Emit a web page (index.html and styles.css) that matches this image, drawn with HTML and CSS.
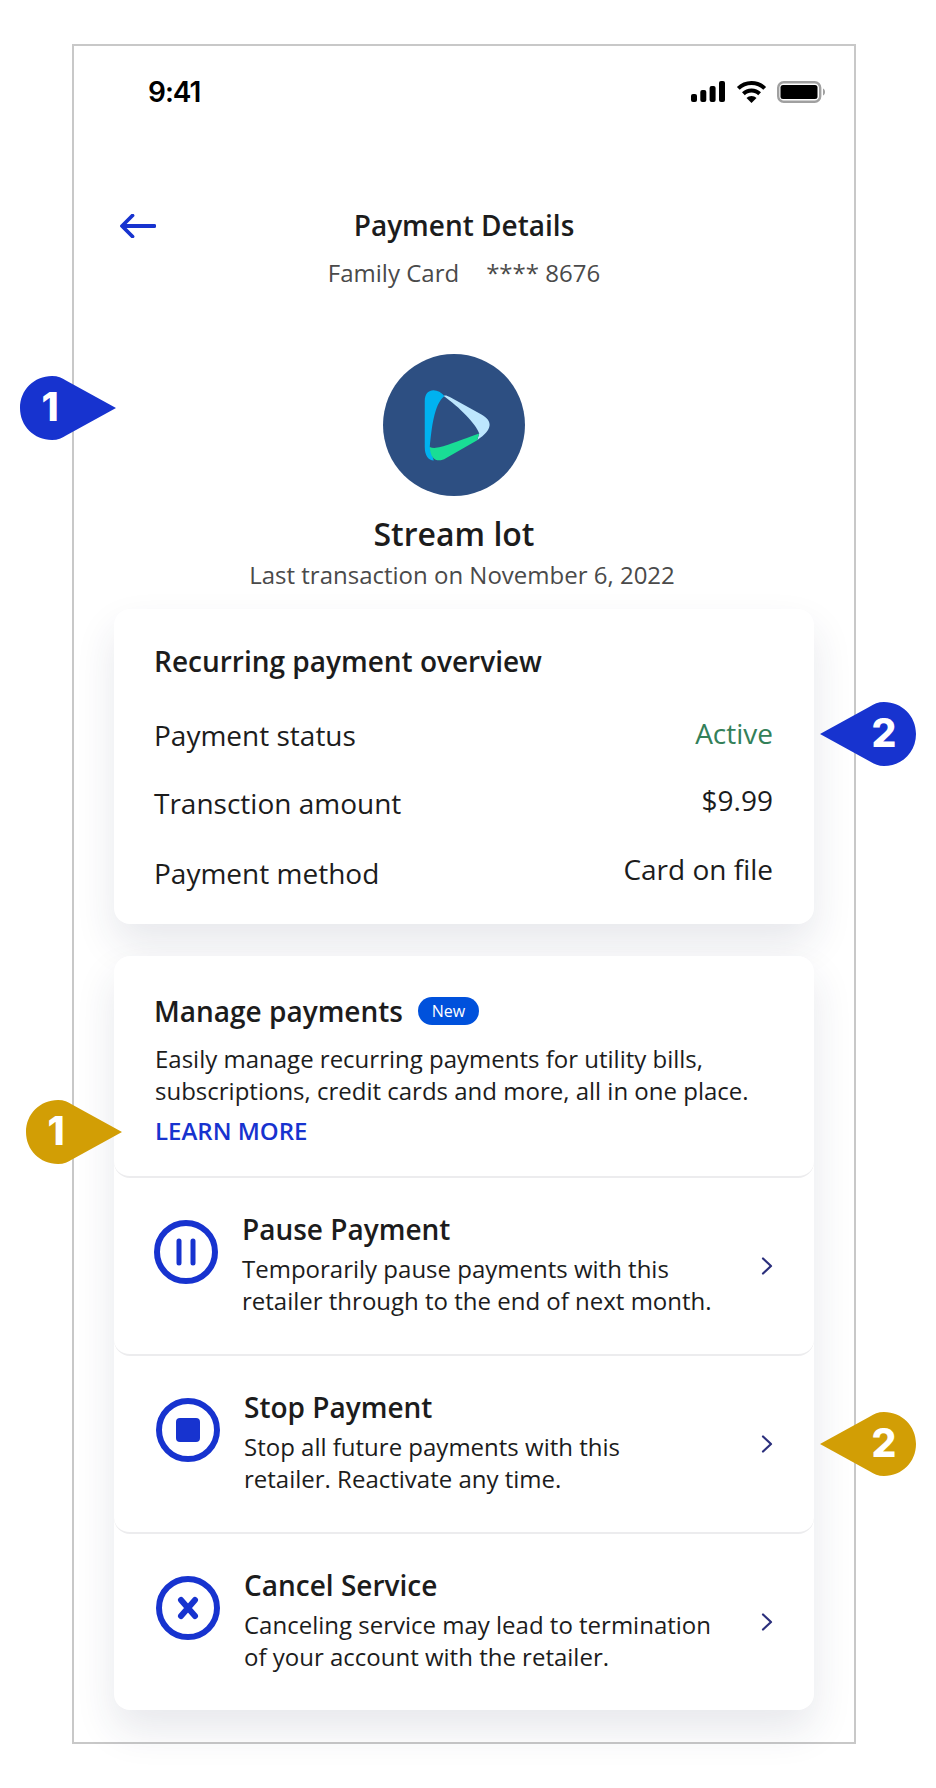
FILE: index.html
```html
<!DOCTYPE html>
<html lang="en">
<head>
    <meta charset="UTF-8">
    <title>Payment Details</title>
    <link rel="stylesheet" href="styles.css">
</head>
<body>
    <div class="phone">
        <!-- Status bar -->
        <div class="status-bar">
            <span class="status-time">9:41</span>
            <div class="status-icons">
                <svg class="icon-signal" width="34" height="21" viewBox="0 0 34 21">
                    <rect x="0" y="13" width="6" height="8" rx="2"/>
                    <rect x="9.3" y="9" width="6" height="12" rx="2"/>
                    <rect x="18.6" y="5" width="6" height="16" rx="2"/>
                    <rect x="28" y="0" width="6" height="21" rx="2"/>
                </svg>
                <svg class="icon-wifi" width="31" height="22" viewBox="0 0 30 22">
                    <path d="M15 0C9.3 0 4.2 2.2 .4 5.9L3.2 8.8C6.3 5.800 10.400 4 15 4s8.700 1.800 11.800 4.800l2.800-2.900C25.800 2.200 20.700 0 15 0z"/>
                    <path d="M15 7.500c-3.700 0-7 1.400-9.500 3.800l2.800 2.900c1.800-1.700 4.100-2.700 6.700-2.700s4.900 1 6.700 2.700l2.800-2.900C22 8.900 18.700 7.500 15 7.500z"/>
                    <path d="M15 15c-2 0-3.700.8-5 2l5 5 5-5c-1.300-1.200-3-2-5-2z"/>
                </svg>
                <svg class="icon-battery" width="48" height="22" viewBox="0 0 48 22">
                    <rect x="1.200" y="1.200" width="42" height="19.600" rx="5.500" fill="none" stroke="#a0a0a0" stroke-width="2.400"/>
                    <rect x="3.500" y="4" width="37" height="14" rx="2.500"/>
                    <path d="M46 7.500c1.200.4 2 1.800 2 3.500s-.8 3.100-2 3.500z" fill="#a0a0a0"/>
                </svg>
            </div>
        </div>

        <!-- Page title -->
        <div class="page-header">
            <svg class="back-arrow" width="36" height="24" viewBox="0 0 36 24">
                <path d="M34.500 12H2.500M12.500 1.500L2 12l10.500 10.500" fill="none" stroke="#1733cf" stroke-width="3.800" stroke-linecap="round" stroke-linejoin="round"/>
            </svg>
            <div class="page-title">Payment Details</div>
        </div>
        <div class="page-subtitle"><span>Family Card</span><span>**** 8676</span></div>

        <!-- Merchant -->
        <div class="merchant">
            <svg class="merchant-logo" width="142" height="142" viewBox="40 27 425 425">
                <circle cx="252.500" cy="239.500" r="212.500" fill="#2d4f82"/>
                <path d="M224 153C205 128 165 126 165 168V305C165 332 176 344 192 346L180 305C186 250 192 178 224 153Z" fill="#00b2f0"/>
                <path d="M222 153C226 150 232 152 240 156L336 209C368 228 370 252 322 285L328 265C318 236 268 186 222 153Z" fill="#bde6fd"/>
                <path d="M180 305C200 316 240 296 328 265L322 285L228 339C206 352 182 346 180 305Z" fill="#19dd95"/>
            </svg>
            <div class="merchant-name">Stream lot</div>
        </div>
        <div class="last-transaction">Last transaction on November 6, 2022</div>

        <!-- Overview card -->
        <div class="card overview">
            <div class="card-title">Recurring payment overview</div>
            <div class="overview-row">
                <span>Payment status</span>
                <span class="overview-value status-active">Active</span>
            </div>
            <div class="overview-row">
                <span>Transction amount</span>
                <span class="overview-value">$9.99</span>
            </div>
            <div class="overview-row">
                <span>Payment method</span>
                <span class="overview-value">Card on file</span>
            </div>
        </div>

        <!-- Manage card -->
        <div class="card manage">
            <div class="manage-intro">
                <div class="manage-heading">
                    <span class="card-title">Manage payments</span>
                    <span class="pill-new">New</span>
                </div>
                <p class="manage-text">Easily manage recurring payments for utility bills,<br>subscriptions, credit cards and more, all in one place.</p>
                <a class="learn-more">LEARN MORE</a>
            </div>

            <div class="action-row action-pause">
                <svg class="action-icon" width="64" height="64" viewBox="0 0 64 64">
                    <circle cx="32" cy="32" r="29" fill="none" stroke="#1733cf" stroke-width="6"/>
                    <path d="M25 21V43M39 21V43" fill="none" stroke="#1733cf" stroke-width="5" stroke-linecap="round"/>
                </svg>
                <div class="action-body">
                    <div class="card-title">Pause Payment</div>
                    <p class="action-text">Temporarily pause payments with this<br>retailer through to the end of next month.</p>
                </div>
                <svg class="chevron" width="12" height="18" viewBox="0 0 12 18">
                    <path d="M2 1.500L10 9L2 16.500" fill="none" stroke="#2b2f7c" stroke-width="2.200" stroke-linecap="round" stroke-linejoin="round"/>
                </svg>
            </div>

            <div class="action-row">
                <svg class="action-icon" width="64" height="64" viewBox="0 0 64 64">
                    <circle cx="32" cy="32" r="29" fill="none" stroke="#1733cf" stroke-width="6"/>
                    <rect x="20" y="20" width="24" height="24" rx="4" fill="#1733cf"/>
                </svg>
                <div class="action-body">
                    <div class="card-title">Stop Payment</div>
                    <p class="action-text">Stop all future payments with this<br>retailer. Reactivate any time.</p>
                </div>
                <svg class="chevron" width="12" height="18" viewBox="0 0 12 18">
                    <path d="M2 1.500L10 9L2 16.500" fill="none" stroke="#2b2f7c" stroke-width="2.200" stroke-linecap="round" stroke-linejoin="round"/>
                </svg>
            </div>

            <div class="action-row action-last">
                <svg class="action-icon" width="64" height="64" viewBox="0 0 64 64">
                    <circle cx="32" cy="32" r="29" fill="none" stroke="#1733cf" stroke-width="6"/>
                    <path d="M25 24L39 40M39 24L25 40" fill="none" stroke="#1733cf" stroke-width="6" stroke-linecap="round"/>
                </svg>
                <div class="action-body">
                    <div class="card-title">Cancel Service</div>
                    <p class="action-text">Canceling service may lead to termination<br>of your account with the retailer.</p>
                </div>
                <svg class="chevron" width="12" height="18" viewBox="0 0 12 18">
                    <path d="M2 1.500L10 9L2 16.500" fill="none" stroke="#2b2f7c" stroke-width="2.200" stroke-linecap="round" stroke-linejoin="round"/>
                </svg>
            </div>
        </div>
    </div>

    <!-- Annotation markers -->
    <div class="marker marker-blue marker-right marker-a"><svg width="96" height="64" viewBox="0 0 96 64"><path d="M32 0C38 0 42 2 46 4.500L96 32L46 59.500C42 62 38 64 32 64C14 64 0 50 0 32S14 0 32 0Z"/></svg><span>1</span></div>
    <div class="marker marker-blue marker-left marker-b"><svg width="96" height="64" viewBox="0 0 96 64"><path d="M64 0C58 0 54 2 50 4.500L0 32L50 59.500C54 62 58 64 64 64C82 64 96 50 96 32S82 0 64 0Z"/></svg><span>2</span></div>
    <div class="marker marker-gold marker-right marker-c"><svg width="96" height="64" viewBox="0 0 96 64"><path d="M32 0C38 0 42 2 46 4.500L96 32L46 59.500C42 62 38 64 32 64C14 64 0 50 0 32S14 0 32 0Z"/></svg><span>1</span></div>
    <div class="marker marker-gold marker-left marker-d"><svg width="96" height="64" viewBox="0 0 96 64"><path d="M64 0C58 0 54 2 50 4.500L0 32L50 59.500C54 62 58 64 64 64C82 64 96 50 96 32S82 0 64 0Z"/></svg><span>2</span></div>
</body>
</html>
```

FILE: styles.css
```css
html, body {
    margin: 0;
    padding: 0;
    background: #fff;
}
body {
    width: 936px;
    height: 1788px;
    position: relative;
    overflow: hidden;
    font-family: "Open Sans", sans-serif;
    color: #1c1c1c;
}
p {
    margin: 0;
}
.phone {
    box-sizing: border-box;
    width: 784px;
    height: 1700px;
    margin: 44px 0 0 72px;
    border: 2px solid #c8c8c8;
    display: flex;
    flex-direction: column;
    align-items: center;
}
/* Status bar */
.status-bar {
    align-self: stretch;
    height: 91px;
    display: flex;
    align-items: center;
    justify-content: space-between;
    padding: 0 29px 0 74px;
}
.status-time {
    font-family: Inter, sans-serif;
    font-weight: 600;
    font-size: 28px;
    letter-spacing: -1px;
    color: #000;
}
.status-icons {
    display: flex;
    align-items: center;
    gap: 10px;
}
.status-icons svg {
    display: block;
}
.icon-wifi {
    margin-left: 1px;
}
/* Page title */
.page-header {
    align-self: stretch;
    display: grid;
    grid-template-columns: 1fr auto 1fr;
    align-items: center;
    margin-top: 71px;
    padding: 0 46px;
}
.back-arrow {
    display: block;
    margin-top: 2px;
}
.page-title {
    font-size: 28px;
    line-height: 34px;
    font-weight: 600;
}
.page-subtitle {
    display: flex;
    gap: 27px;
    margin-top: 14px;
    font-size: 24px;
    line-height: 34px;
    color: #4a4a4a;
}
/* Merchant */
.merchant {
    display: flex;
    flex-direction: column;
    align-items: center;
    margin: 64px 20px 0 0;
}
.merchant-logo {
    display: block;
}
.merchant-name {
    margin-top: 16px;
    font-size: 32px;
    line-height: 44px;
    font-weight: 600;
}
.last-transaction {
    margin: 2px 4px 0 0;
    font-size: 24px;
    line-height: 34px;
    color: #4a4a4a;
}
/* Cards */
.card {
    box-sizing: border-box;
    width: 700px;
    background: #fff;
    border-radius: 16px;
    box-shadow: 0 20px 40px rgba(40, 50, 80, 0.11);
}
.card-title {
    font-size: 28px;
    line-height: 36px;
    font-weight: 600;
}
.overview {
    height: 315px;
    margin-top: 17px;
    padding: 34px 41px 0 40px;
}
.overview-row {
    display: flex;
    justify-content: space-between;
    align-items: flex-start;
    margin-top: 32px;
    font-size: 28px;
    line-height: 36px;
}
.overview .card-title + .overview-row {
    margin-top: 38px;
}
.overview-row:last-child {
    margin-top: 34px;
}
.overview-value {
    margin-top: -3px;
}
.overview-row:last-child .overview-value {
    margin-top: -4px;
}
.overview .status-active {
    margin-top: -2px;
    color: #338059;
}
.manage {
    margin-top: 32px;
}
.manage-intro {
    box-sizing: border-box;
    height: 222px;
    padding: 37px 41px 0;
    border-bottom: 2px solid #ececee;
    border-radius: 16px;
}
.manage-heading {
    display: flex;
    align-items: center;
    gap: 15px;
    margin-left: -1px;
}
.pill-new {
    width: 61px;
    height: 28px;
    line-height: 28px;
    border-radius: 14px;
    background: #0051dc;
    color: #fff;
    font-size: 16px;
    text-align: center;
}
.manage-text {
    margin-top: 14px;
    font-size: 24px;
    line-height: 32px;
}
.learn-more {
    display: block;
    margin-top: 8px;
    font-size: 24px;
    line-height: 32px;
    font-weight: 600;
    color: #1733cf;
}
.action-row {
    box-sizing: border-box;
    height: 178px;
    display: flex;
    align-items: center;
    padding: 0 41px 0 42px;
    border-bottom: 2px solid #ececee;
    border-radius: 16px;
}
.action-last {
    height: 176px;
    border-bottom: none;
}
.action-pause {
    padding-left: 40px;
}
.action-icon {
    align-self: flex-start;
    margin-top: 42px;
    flex-shrink: 0;
}
.action-body {
    align-self: flex-start;
    margin: 33px 0 0 24px;
}
.action-text {
    margin-top: 6px;
    font-size: 24px;
    line-height: 32px;
}
.chevron {
    display: block;
    margin-left: auto;
}
/* Annotation markers */
.marker {
    position: absolute;
    width: 96px;
    height: 64px;
}
.marker svg {
    display: block;
}
.marker span {
    position: absolute;
    top: -1px;
    width: 64px;
    font-family: Inter, sans-serif;
    font-size: 39px;
    line-height: 64px;
    font-weight: 800;
    text-align: center;
    color: #fff;
}
.marker-right span {
    left: -2px;
}
.marker-left span {
    right: 0;
}
.marker-blue svg {
    fill: #1733cf;
}
.marker-gold svg {
    fill: #d29e05;
}
.marker-a {
    left: 20px;
    top: 376px;
}
.marker-b {
    left: 820px;
    top: 702px;
}
.marker-c {
    left: 26px;
    top: 1100px;
}
.marker-d {
    left: 820px;
    top: 1412px;
}
```
